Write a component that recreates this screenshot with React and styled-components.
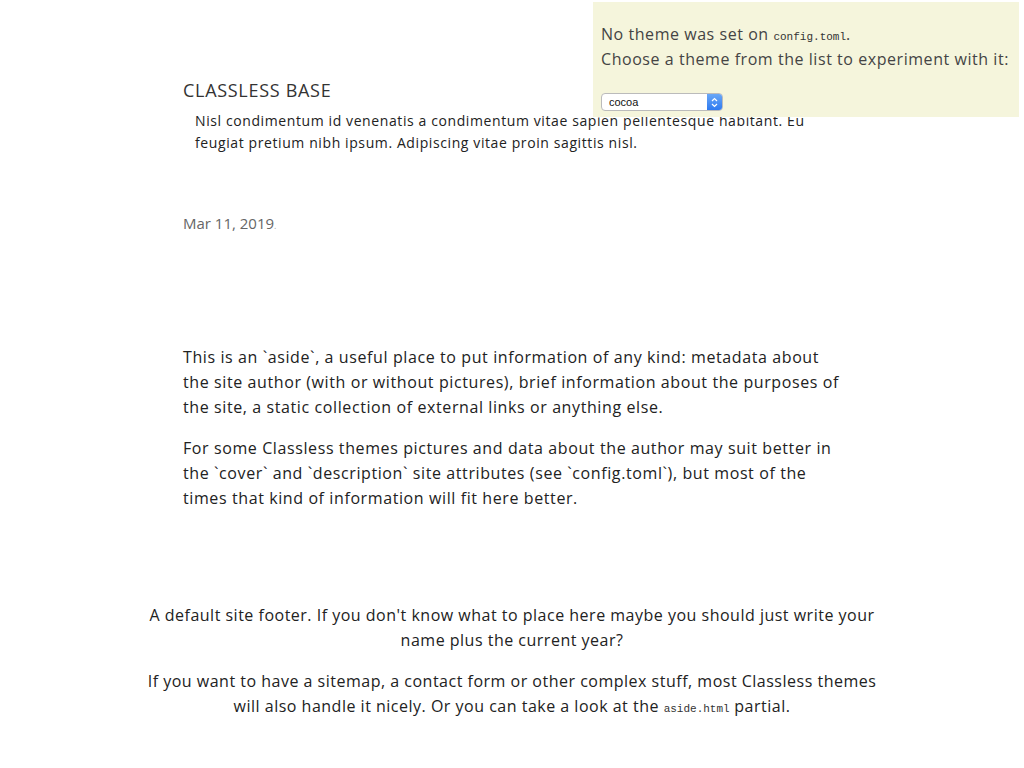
import React from "react";
import styled, { createGlobalStyle } from "styled-components";

const GlobalStyle = createGlobalStyle`
  html, body {
    margin: 0;
    padding: 0;
    background: #fff;
  }
  body {
    font-family: "Open Sans", "Liberation Sans", sans-serif;
    color: #222;
  }
`;

const Page = styled.div`
  width: 100%;
`;

const Container = styled.main`
  width: 658px;
  margin: 0 auto;
  padding-top: 78px;
`;

const SiteTitle = styled.h1`
  margin: 0;
  font-size: 18px;
  font-weight: 400;
  line-height: 24px;
  color: #333;
  text-transform: uppercase;
  letter-spacing: 0.7px;
`;

const Description = styled.p`
  margin: 8px 0 0 12px;
  font-size: 14px;
  line-height: 22px;
  letter-spacing: 0.6px;
  color: #222;
`;

const DateLine = styled.p`
  margin: 57px 0 0;
  font-size: 15px;
  line-height: 24px;
  color: #666;
`;

const Dot = styled.span`
  font-size: 9px;
  color: #aaa;
`;

const Aside = styled.aside`
  margin-top: 107px;
`;

const AsideText = styled.p`
  margin: 0 0 16px;
  font-size: 16px;
  line-height: 25px;
  letter-spacing: 0.6px;
  color: #222;
`;

const Footer = styled.footer`
  width: 738px;
  margin: 92px auto 0;
  text-align: center;
`;

const FooterText = styled.p`
  margin: 0 0 16px;
  font-size: 16px;
  line-height: 25px;
  letter-spacing: 0.5px;
  color: #222;
`;

const Code = styled.code`
  font-family: "Liberation Mono", monospace;
  font-size: 11px;
  line-height: 1;
  letter-spacing: 0;
  color: #333;
`;

const ThemeBox = styled.div`
  position: fixed;
  top: 2px;
  right: 5px;
  width: 410px;
  padding: 20px 8px 6px;
  background: #f5f5dc;
  color: #444;
`;

const ThemeText = styled.p`
  margin: 0;
  font-size: 16px;
  line-height: 25px;
  letter-spacing: 0.55px;
  white-space: nowrap;
`;

const SelectWrap = styled.div`
  display: flex;
  width: 122px;
  height: 18px;
  margin-top: 21px;
  border: 1px solid #bbb;
  border-radius: 4px;
  background: #fff;
  box-sizing: border-box;
  overflow: hidden;
`;

const SelectLabel = styled.span`
  flex: 1;
  padding-left: 7px;
  font-family: "Liberation Sans", sans-serif;
  font-size: 11px;
  line-height: 16px;
  color: #111;
`;

const Stepper = styled.span`
  display: flex;
  align-items: center;
  justify-content: center;
  width: 15px;
  background: linear-gradient(#6aa8f7, #2f7af0);
`;

export default function App() {
  return (
    <Page>
      <GlobalStyle />
      <Container>
        <SiteTitle>Classless Base</SiteTitle>
        <Description>
          Nisl condimentum id venenatis a condimentum vitae sapien pellentesque
          habitant. Eu feugiat pretium nibh ipsum. Adipiscing vitae proin
          sagittis nisl.
        </Description>
        <DateLine>
          Mar 11, 2019<Dot>.</Dot>
        </DateLine>
        <Aside>
          <AsideText>
            This is an `aside`, a useful place to put information of any kind:
            metadata about the site author (with or without pictures), brief
            information about the purposes of the site, a static collection of
            external links or anything else.
          </AsideText>
          <AsideText>
            For some Classless themes pictures and data about the author may
            suit better in the `cover` and `description` site attributes (see
            `config.toml`), but most of the times that kind of information will
            fit here better.
          </AsideText>
        </Aside>
      </Container>
      <Footer>
        <FooterText>
          A default site footer. If you don't know what to place here maybe you
          should just write your name plus the current year?
        </FooterText>
        <FooterText>
          If you want to have a sitemap, a contact form or other complex stuff,
          most Classless themes will also handle it nicely. Or you can take a
          look at the <Code>aside.html</Code> partial.
        </FooterText>
      </Footer>
      <ThemeBox>
        <ThemeText>
          No theme was set on <Code>config.toml</Code>.
        </ThemeText>
        <ThemeText>Choose a theme from the list to experiment with it:</ThemeText>
        <SelectWrap>
          <SelectLabel>cocoa</SelectLabel>
          <Stepper>
            <svg width="7" height="11" viewBox="0 0 7 11">
              <path
                d="M1 4 L3.5 1.5 L6 4 M1 7 L3.5 9.5 L6 7"
                fill="none"
                stroke="#fff"
                strokeWidth="1.2"
              />
            </svg>
          </Stepper>
        </SelectWrap>
      </ThemeBox>
    </Page>
  );
}
